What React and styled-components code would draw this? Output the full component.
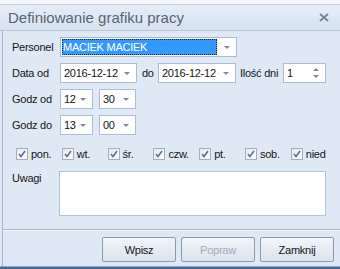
import React from 'react';
import styled, { createGlobalStyle } from 'styled-components';

const GlobalStyle = createGlobalStyle`
  * { box-sizing: border-box; }
  html, body { margin: 0; padding: 0; }
  body {
    background: #dfe9f5;
    font-family: "Liberation Sans", Arial, sans-serif;
    overflow: hidden;
  }
`

const Window = styled.div`
  width: 340px;
  height: 269px;
  display: flex;
  flex-direction: column;
  background: #dfe9f5;
`
const TopStrip = styled.div`
  height: 5px;
  background: #f3f6fa;
  border-bottom: 1px solid #c3cfdd;
`
const TitleBar = styled.div`
  height: 26px;
  display: flex;
  align-items: center;
  justify-content: space-between;
  padding: 0 11px 0 8px;
  background: linear-gradient(#e4edf8, #d8e3f1);
  border-bottom: 1px solid #b6c6da;
`
const Title = styled.span`
  font-size: 15px;
  color: #59636f;
`
const Frame = styled.div`
  flex: 1;
  display: flex;
  flex-direction: column;
  margin-left: 2px;
  border-left: 1px solid #a3b5cc;
`
const Form = styled.div`
  flex: 1;
  display: flex;
  flex-direction: column;
  padding: 6px 0 0 9px;
`
const Row = styled.div`
  display: flex;
  align-items: ${p => p.$top ? 'flex-start' : 'center'};
  height: ${p => p.$h || 20}px;
  margin-bottom: ${p => p.$mb ?? 6}px;
`
const Text = styled.span`
  font-size: 11px;
  letter-spacing: -0.25px;
  color: #151515;
  white-space: nowrap;
  width: ${p => p.$w ? `${p.$w}px` : 'auto'};
  padding-top: ${p => p.$pt || 0}px;
`
const Field = styled.div`
  width: ${p => p.$w}px;
  height: ${p => p.$h || 20}px;
  margin-right: ${p => p.$mr || 0}px;
  display: flex;
  align-items: center;
  padding-left: 2px;
  background: #fff;
  border: 1px solid #abbdd3;
  font-size: 11px;
  letter-spacing: -0.25px;
  color: #151515;
`
const Value = styled.span`
  flex: 1;
  padding-left: 1px;
`
const Selected = styled.span`
  width: 156px;
  height: 16px;
  margin-right: 7px;
  display: flex;
  align-items: center;
  padding-left: 1px;
  background: #3399ff;
  color: #fff;
  outline: 1px dotted #1a2a40;
  outline-offset: -1px;
`
const Arrow = styled.span`
  width: 0;
  height: 0;
  margin-right: 6px;
  border-left: 3px solid transparent;
  border-right: 3px solid transparent;
  border-${p => p.$up ? 'bottom' : 'top'}: 3px solid #7a8a9e;
`
const Spin = styled.span`
  display: flex;
  flex-direction: column;
  gap: 4px;
  margin-right: 6px;
`
const DaysRow = styled.div`
  display: grid;
  grid-template-columns: repeat(7, 45.8px);
  height: 16px;
  margin: 11px 0 9px 4px;
`
const Day = styled.label`
  display: flex;
  align-items: center;
  gap: 3px;
`
const Box = styled.span`
  width: 12px;
  height: 12px;
  display: flex;
  align-items: center;
  justify-content: center;
  border: 1px solid #a3afbf;
  background: linear-gradient(135deg, #e6eaef, #fbfcfd);
`
const Notes = styled.div`
  width: 267px;
  height: 45px;
  background: #fff;
  border: 1px solid #b3c3d7;
`
const Footer = styled.div`
  height: 37px;
  display: flex;
  justify-content: flex-end;
  gap: 5px;
  padding: 7px 6px 0 0;
  border-top: 1px solid #a9b8cc;
  box-shadow: inset 0 1px 0 #f1f5fb;
`
const Button = styled.div`
  width: 74px;
  height: 25px;
  display: flex;
  align-items: center;
  justify-content: center;
  border: 1px solid #8b9aad;
  border-radius: 2px;
  background: linear-gradient(#f3f6fa, #e4ebf3 50%, #dae3ee);
  font-size: 11px;
  letter-spacing: -0.25px;
  color: ${p => p.$disabled ? '#a3aab4' : '#151515'};
`
const BottomEdge = styled.div`
  height: 3px;
  background: #45679a;
  border-top: 1px solid #8ea6c6;
`

const Check = () => (
  <svg width="8" height="8" viewBox="0 0 8 8">
    <path d="M1 4 L3 6.5 L7 1" fill="none" stroke="#566c8f" strokeWidth="1.5" />
  </svg>
);

const Close = () => (
  <svg width="10" height="9" viewBox="0 0 10 9">
    <path d="M1 1 L9 8 M9 1 L1 8" stroke="#7b8593" strokeWidth="2" />
  </svg>
);

const days = ['pon.', 'wt.', 'śr.', 'czw.', 'pt.', 'sob.', 'nied'];

export default function App() {
  return (
    <Window>
      <GlobalStyle />
      <TopStrip />
      <TitleBar>
        <Title>Definiowanie grafiku pracy</Title>
        <Close />
      </TitleBar>
      <Frame>
        <Form>
          <Row>
            <Text $w={48}>Personel</Text>
            <Field $w={177} style={{ paddingLeft: 1 }}>
              <Selected>MACIEK MACIEK</Selected>
              <Arrow />
            </Field>
          </Row>
          <Row>
            <Text $w={48}>Data od</Text>
            <Field $w={77} $mr={5}>
              <Value>2016-12-12</Value>
              <Arrow />
            </Field>
            <Text $w={16}>do</Text>
            <Field $w={78} $mr={4}>
              <Value>2016-12-12</Value>
              <Arrow />
            </Field>
            <Text $w={43}>Ilość dni</Text>
            <Field $w={43}>
              <Value>1</Value>
              <Spin>
                <Arrow $up style={{ margin: 0 }} />
                <Arrow style={{ margin: 0 }} />
              </Spin>
            </Field>
          </Row>
          <Row>
            <Text $w={48}>Godz od</Text>
            <Field $w={33} $mr={6}>
              <Value>12</Value>
              <Arrow />
            </Field>
            <Field $w={37}>
              <Value>30</Value>
              <Arrow />
            </Field>
          </Row>
          <Row $mb={0}>
            <Text $w={48}>Godz do</Text>
            <Field $w={33} $mr={6}>
              <Value>13</Value>
              <Arrow />
            </Field>
            <Field $w={37}>
              <Value>00</Value>
              <Arrow />
            </Field>
          </Row>
          <DaysRow>
            {days.map(d => (
              <Day key={d}>
                <Box><Check /></Box>
                <Text>{d}</Text>
              </Day>
            ))}
          </DaysRow>
          <Row $top $h={45} $mb={0}>
            <Text $w={47} $pt={1}>Uwagi</Text>
            <Notes />
          </Row>
        </Form>
        <Footer>
          <Button>Wpisz</Button>
          <Button $disabled>Popraw</Button>
          <Button>Zamknij</Button>
        </Footer>
      </Frame>
      <BottomEdge />
    </Window>
  );
}
